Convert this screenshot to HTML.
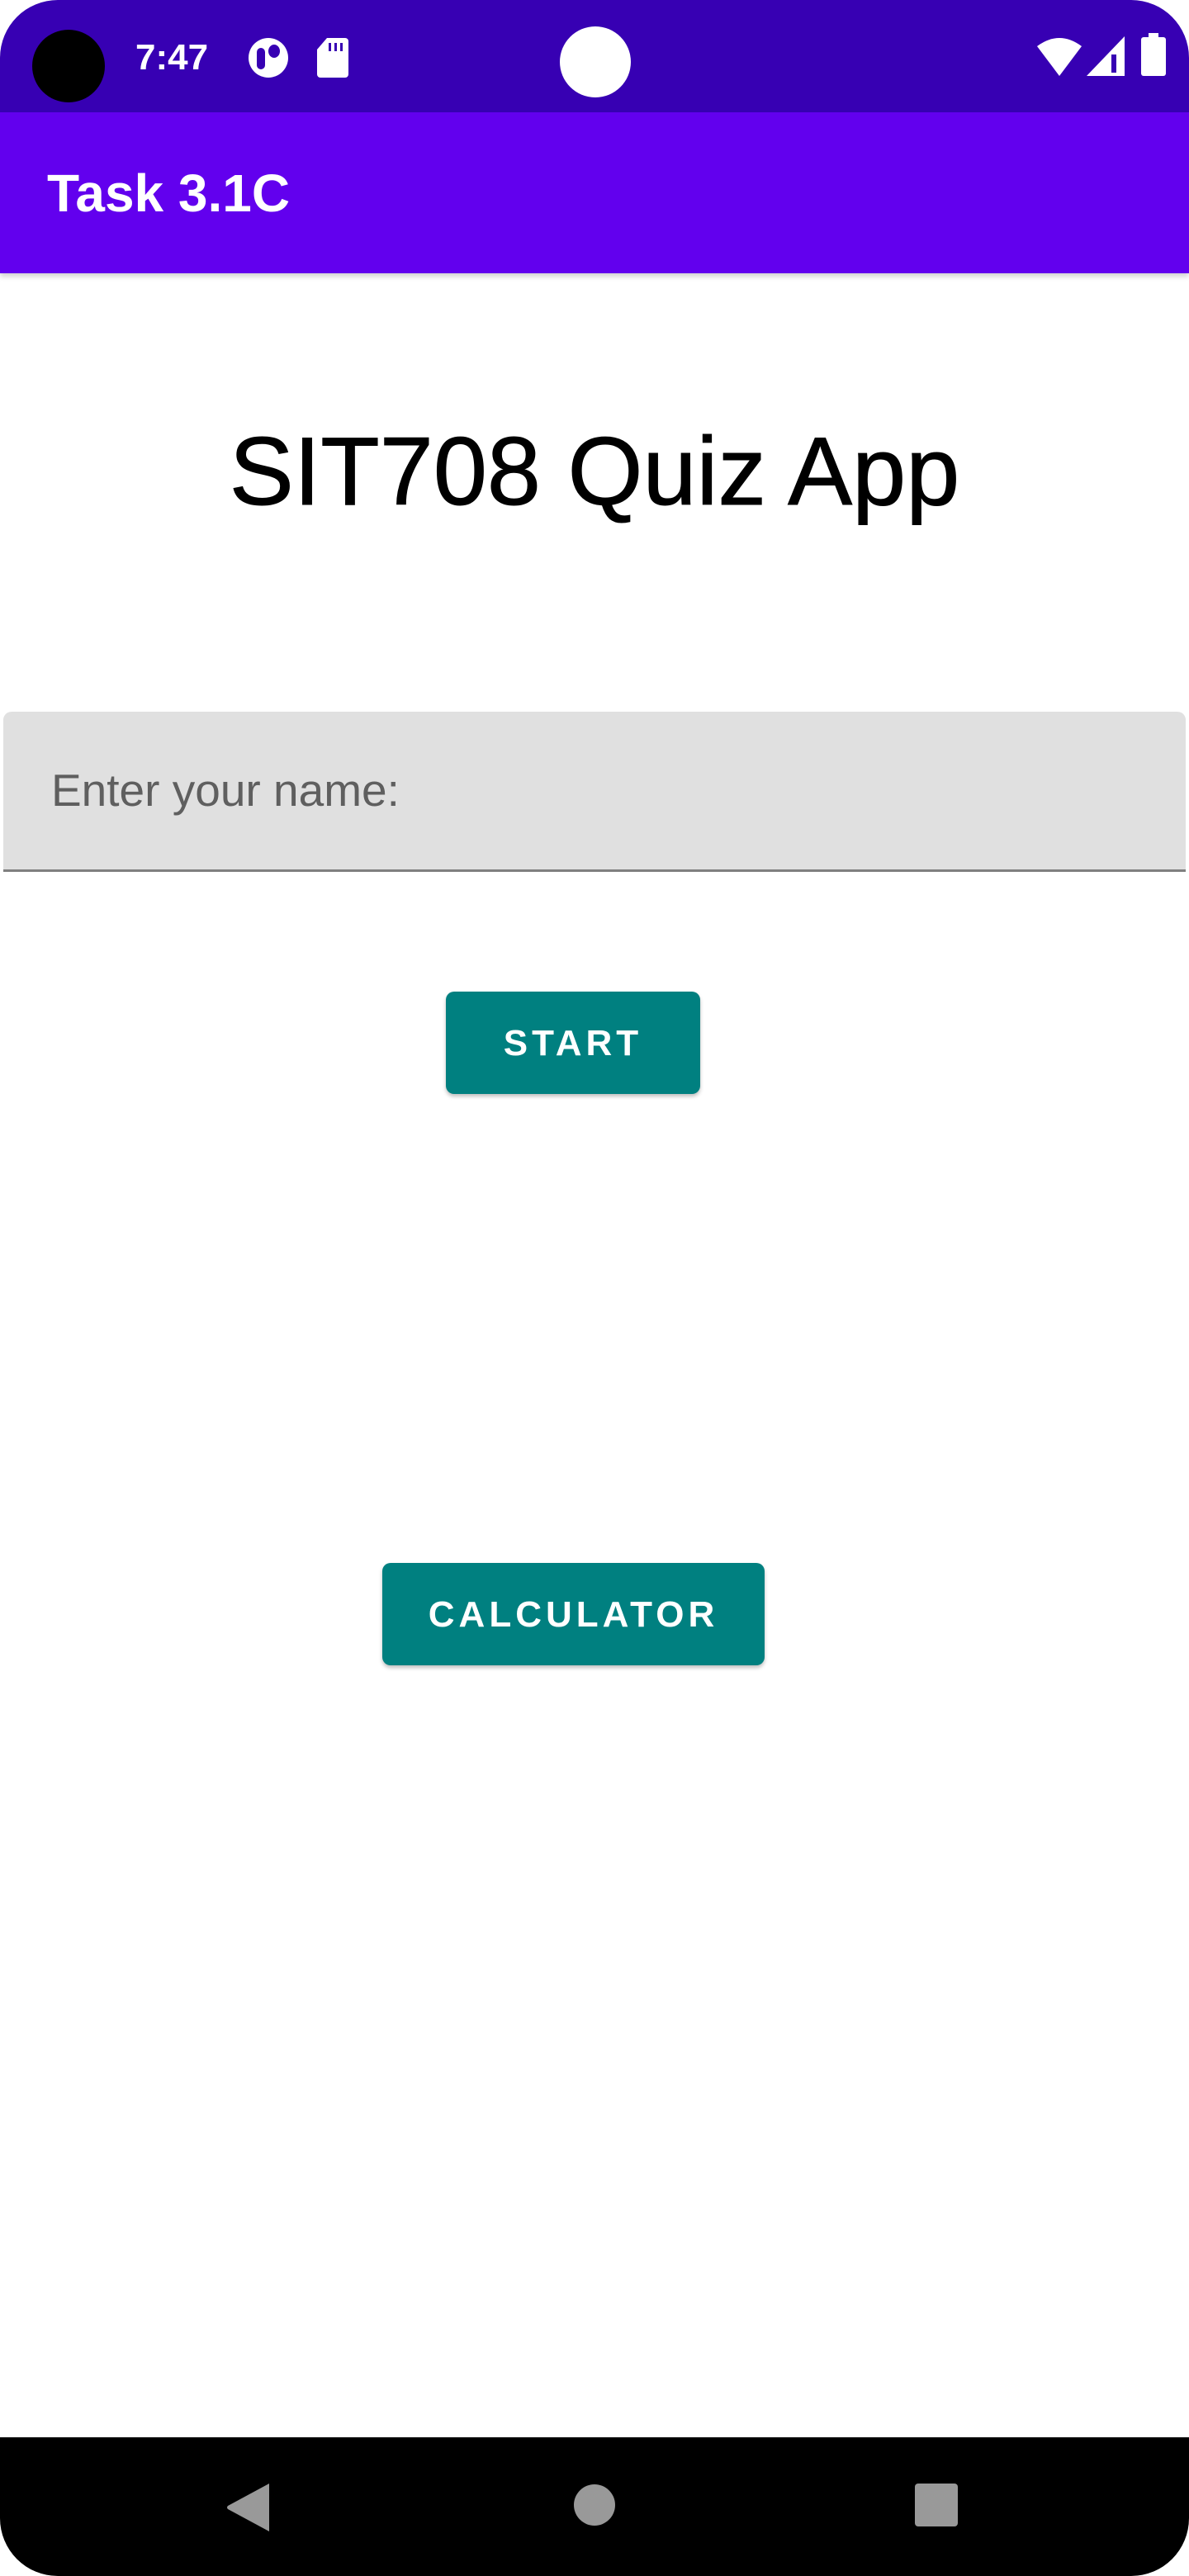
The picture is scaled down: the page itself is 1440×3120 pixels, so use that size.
<!DOCTYPE html>
<html><head><meta charset="utf-8"><style>
*{margin:0;padding:0;box-sizing:border-box}
html,body{width:1440px;height:3120px;background:#fff;overflow:hidden;font-family:"Liberation Sans",sans-serif}
.screen{position:absolute;left:0;top:0;width:1440px;height:3120px;border-radius:70px;overflow:hidden;background:#fff}
.status{position:absolute;left:0;top:0;width:1440px;height:136px;background:#3700b3}
.appbar{position:absolute;left:0;top:136px;width:1440px;height:195px;background:#6200ee;box-shadow:0 4px 6px rgba(0,0,0,.18)}
.appbar span{position:absolute;left:57px;top:66px;font-size:64px;font-weight:bold;color:#fff;line-height:1}
.abs{position:absolute}
.h1{position:absolute;left:0;width:1440px;top:512px;text-align:center;font-size:117px;line-height:1;color:#000;-webkit-text-stroke:1px #000}
.field{position:absolute;left:4px;top:862px;width:1432px;height:194px;background:#e0e0e0;border-radius:10px 10px 0 0;border-bottom:3px solid #808080}
.field span{position:absolute;left:58px;top:68px;font-size:55px;color:#5f5f5f;line-height:1}
.btn{position:absolute;background:#008080;border-radius:10px;color:#fff;font-size:44px;font-weight:bold;letter-spacing:5px;text-align:center;box-shadow:0 3px 5px rgba(0,0,0,.25)}
.nav{position:absolute;left:0;top:2952px;width:1440px;height:168px;background:#000}
</style></head><body><div class="screen">
<div class="status">
 <div class="abs" style="left:39px;top:36px;width:88px;height:88px;border-radius:50%;background:#000"></div>
 <div class="abs" style="left:164px;top:48px;font-size:44px;font-weight:bold;color:#fff;line-height:1">7:47</div>
 <div class="abs" style="left:301px;top:46px;width:48px;height:48px;border-radius:50%;background:#fff"></div>
 <div class="abs" style="left:311px;top:58px;width:10px;height:26px;border-radius:5px;background:#3700b3"></div>
 <div class="abs" style="left:325px;top:54px;width:14px;height:16px;border-radius:50%;background:#3700b3"></div>
 <svg class="abs" style="left:384px;top:46px" width="38" height="48" viewBox="0 0 38 48"><path d="M12 0H34a4 4 0 0 1 4 4V44a4 4 0 0 1-4 4H4a4 4 0 0 1-4-4V14Z" fill="#fff"/><rect x="14" y="6" width="3" height="10" fill="#3700b3"/><rect x="21" y="6" width="3" height="10" fill="#3700b3"/><rect x="28" y="6" width="3" height="10" fill="#3700b3"/></svg>
 <div class="abs" style="left:678px;top:32px;width:86px;height:86px;border-radius:50%;background:#fff"></div>
 <svg class="abs" style="left:1256px;top:44px" width="54" height="48" viewBox="0 0 54 48"><path d="M0 12Q27-8 54 12L27 48Z" fill="#fff"/></svg>
 <svg class="abs" style="left:1316px;top:44px" width="46" height="48" viewBox="0 0 46 48"><path d="M46 0V48H0Z" fill="#fff"/><path d="M30 22V44H36V22Z" fill="#3700b3"/></svg>
 <svg class="abs" style="left:1382px;top:40px" width="30" height="52" viewBox="0 0 30 52"><rect x="9" y="0" width="12" height="6" fill="#fff"/><rect x="0" y="5" width="30" height="47" rx="3" fill="#fff"/></svg>
</div>
<div class="appbar"><span>Task 3.1C</span></div>
<div class="h1">SIT708 Quiz App</div>
<div class="field"><span>Enter your name:</span></div>
<div class="btn" style="left:540px;top:1201px;width:308px;height:124px;line-height:126px">START</div>
<div class="btn" style="left:463px;top:1893px;width:463px;height:124px;line-height:126px">CALCULATOR</div>
<div class="nav">
 <svg class="abs" style="left:274px;top:56px" width="52" height="58" viewBox="0 0 52 58"><path d="M52 0V58L2 31Q0 29 2 27Z" fill="#999"/></svg>
 <div class="abs" style="left:695px;top:57px;width:50px;height:50px;border-radius:50%;background:#999"></div>
 <div class="abs" style="left:1108px;top:56px;width:52px;height:52px;border-radius:4px;background:#999"></div>
</div>
</div></body></html>
